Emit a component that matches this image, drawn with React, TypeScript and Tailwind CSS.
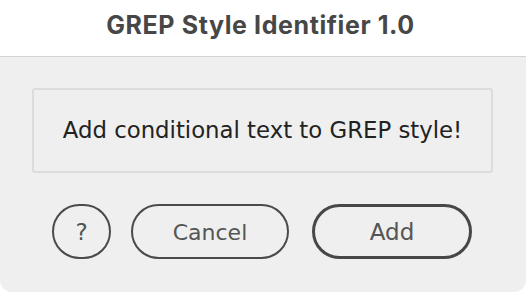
const App = () => {
  return (
    <div className="w-[526px] h-[292px] bg-white flex flex-col overflow-hidden">
      <div className="h-[57px] shrink-0 flex items-center justify-center border-b border-[#d3d3d3] bg-white">
        <h1 className="font-['Inter',sans-serif] font-bold text-[25px] tracking-[0.6px] text-[#474747] pb-[5px] pr-[5px]">
          GREP Style Identifier 1.0
        </h1>
      </div>
      <div className="flex-1 bg-[#efefef] rounded-b-[12px] pl-[32px] pt-[31px]">
        <div className="w-[461px] h-[85px] rounded-[3px] border-2 border-[#dcdcdc] flex items-center justify-center">
          <p className="font-['DejaVu_Sans',sans-serif] text-[22.8px] text-[#222]">
            Add conditional text to GREP style!
          </p>
        </div>
        <div className="flex items-center mt-[31px] ml-[20px] font-['DejaVu_Sans',sans-serif] text-[#555]">
          <button className="w-[59px] h-[55px] rounded-full border-2 border-[#4a4a4a] text-[23px] flex items-center justify-center pt-[2px]">
            ?
          </button>
          <button className="ml-[20px] w-[158px] h-[55px] rounded-full border-2 border-[#4a4a4a] text-[22px] flex items-center justify-center pt-[2px]">
            Cancel
          </button>
          <button className="ml-[23px] w-[160px] h-[55px] rounded-full border-[3px] border-[#474747] text-[23px] flex items-center justify-center pt-[2px]">
            Add
          </button>
        </div>
      </div>
    </div>
  );
};

export default App;
